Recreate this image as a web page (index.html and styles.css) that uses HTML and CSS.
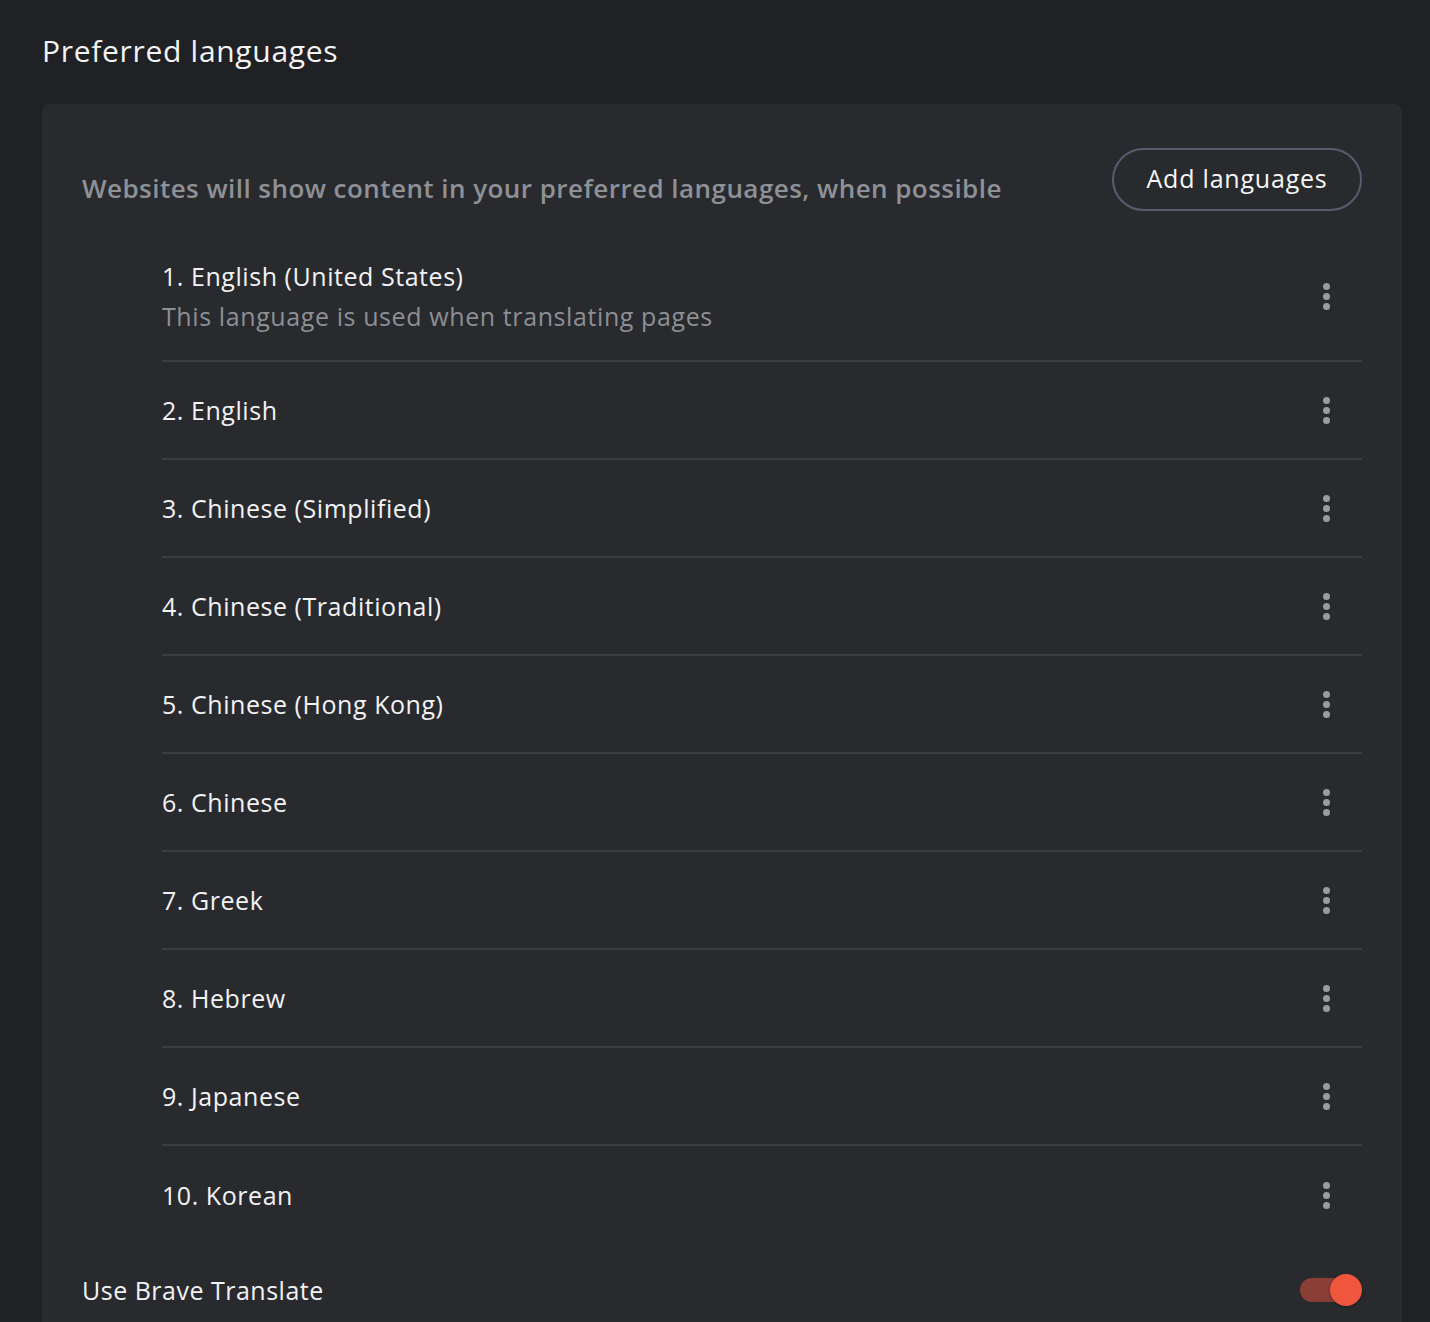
FILE: index.html
```html
<!DOCTYPE html>
<html>
<head>
<meta charset="utf-8">
<link rel="stylesheet" href="styles.css">
</head>
<body>
<div class="page">
  <h1 class="title">Preferred languages</h1>
  <section class="card">
    <div class="card-head">
      <p class="desc">Websites will show content in your preferred languages, when possible</p>
      <button class="add-btn">Add languages</button>
    </div>
    <ul class="lang-list">
      <li class="lang first">
        <div class="lang-text">
          <div class="lang-name">1. English (United States)</div>
          <div class="lang-sub">This language is used when translating pages</div>
        </div>
        <span class="more"><i></i><i></i><i></i></span>
      </li>
      <li class="lang"><div class="lang-name">2. English</div><span class="more"><i></i><i></i><i></i></span></li>
      <li class="lang"><div class="lang-name">3. Chinese (Simplified)</div><span class="more"><i></i><i></i><i></i></span></li>
      <li class="lang"><div class="lang-name">4. Chinese (Traditional)</div><span class="more"><i></i><i></i><i></i></span></li>
      <li class="lang"><div class="lang-name">5. Chinese (Hong Kong)</div><span class="more"><i></i><i></i><i></i></span></li>
      <li class="lang"><div class="lang-name">6. Chinese</div><span class="more"><i></i><i></i><i></i></span></li>
      <li class="lang"><div class="lang-name">7. Greek</div><span class="more"><i></i><i></i><i></i></span></li>
      <li class="lang"><div class="lang-name">8. Hebrew</div><span class="more"><i></i><i></i><i></i></span></li>
      <li class="lang"><div class="lang-name">9. Japanese</div><span class="more"><i></i><i></i><i></i></span></li>
      <li class="lang"><div class="lang-name">10. Korean</div><span class="more"><i></i><i></i><i></i></span></li>
    </ul>
    <div class="setting">
      <span class="setting-label">Use Brave Translate</span>
      <span class="toggle"><span class="track"></span><span class="thumb"></span></span>
    </div>
  </section>
</div>
</body>
</html>
```

FILE: styles.css
```css
* { box-sizing: border-box; }
html, body { margin: 0; padding: 0; }
body {
  background: #202125;
  color: #f0f0f2;
  font-family: "Open Sans", Lato, sans-serif;
  height: 1322px;
  overflow: hidden;
}
.page {
  padding: 0 28px 0 42px;
}
.title {
  margin: 0;
  padding-top: 31px;
  height: 104px;
  font-family: "Open Sans", sans-serif;
  font-weight: 400;
  font-size: 30px;
  letter-spacing: 0.7px;
  line-height: 40px;
  color: #f4f4f6;
}
.card {
  background: #292a2e;
  border-radius: 8px 8px 0 0;
  padding: 44px 40px 0 40px;
  height: 1218px;
}
.card-head {
  display: flex;
  align-items: center;
  justify-content: space-between;
  height: 63px;
}
.desc {
  margin: 16px 0 0 0;
  font-family: "Open Sans", sans-serif;
  font-weight: 600;
  font-size: 26px;
  letter-spacing: 0.45px;
  color: #8e9196;
  white-space: nowrap;
}
.add-btn {
  width: 250px;
  height: 63px;
  border: 2px solid #5c5a6e;
  border-radius: 32px;
  background: transparent;
  color: #f6f6f8;
  font-family: "Open Sans", sans-serif;
  font-size: 25px;
  letter-spacing: 0.8px;
  padding: 0 0 3px 0;
}
.lang-list {
  list-style: none;
  margin: 21px 0 0 80px;
  padding: 0;
}
.lang {
  display: flex;
  align-items: center;
  justify-content: space-between;
  height: 98px;
  border-bottom: 2px solid #3c3d41;
}
.lang.first { height: 130px; }
.lang:last-child { border-bottom: none; }
.lang-name {
  font-size: 25px;
  letter-spacing: 0.55px;
  line-height: 32px;
  color: #f2f2f4;
}
.lang-sub {
  font-size: 25px;
  letter-spacing: 0.6px;
  line-height: 32px;
  color: #8c8f94;
  margin-top: 8px;
}
.more {
  display: flex;
  flex-direction: column;
  gap: 3px;
  margin-right: 32px;
}
.more i {
  width: 7px;
  height: 7px;
  border-radius: 50%;
  background: #9a9ca1;
}
.setting {
  display: flex;
  align-items: center;
  justify-content: space-between;
  margin-top: 30px;
  height: 32px;
}
.setting-label {
  font-size: 25px;
  letter-spacing: 0.5px;
  color: #f2f2f4;
}
.toggle {
  position: relative;
  width: 62px;
  height: 32px;
}
.track {
  position: absolute;
  left: 0;
  top: 4px;
  width: 50px;
  height: 24px;
  border-radius: 12px;
  background: #8a3f36;
}
.thumb {
  position: absolute;
  right: 0;
  top: 0;
  width: 32px;
  height: 32px;
  border-radius: 50%;
  background: #f0553d;
  box-shadow: 0 1px 3px rgba(0,0,0,0.4);
}
```
